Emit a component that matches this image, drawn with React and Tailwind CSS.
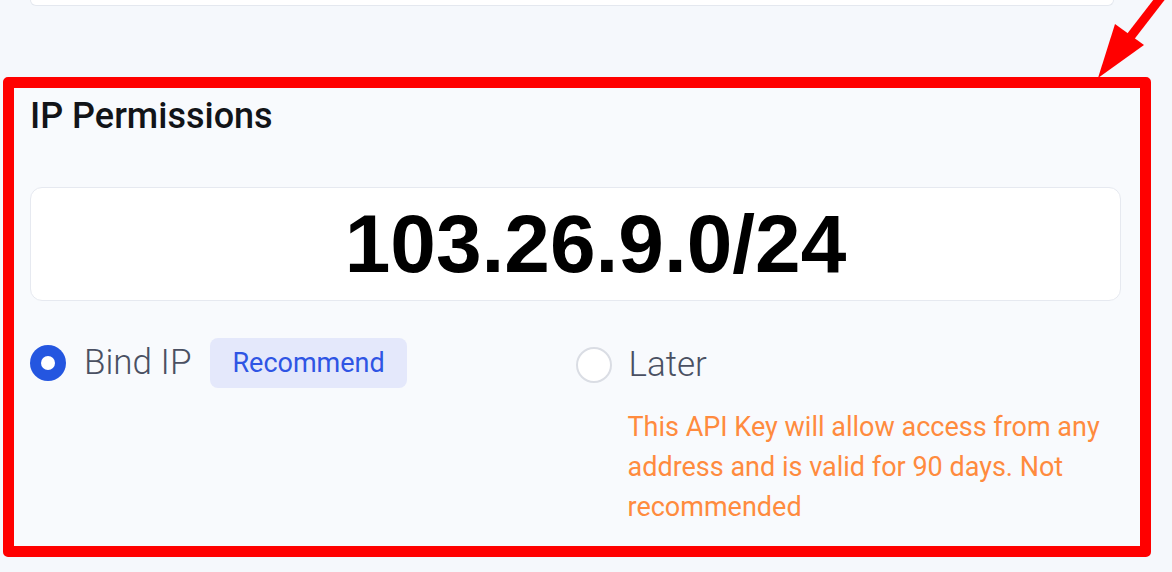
import React from 'react';

function Radio({ checked }) {
  if (checked) {
    return (
      <span className="flex h-[36px] w-[36px] shrink-0 items-center justify-center rounded-full bg-[#2456e0]">
        <span className="h-[14px] w-[14px] rounded-full bg-white" />
      </span>
    );
  }
  return <span className="h-[36px] w-[36px] shrink-0 rounded-full border-2 border-[#dadde4] bg-white" />;
}

export default function App() {
  return (
    <div className="relative h-[572px] w-[1172px] overflow-hidden bg-[#f5f8fc] font-['Roboto','Liberation_Sans',sans-serif]">
      {/* bottom of the card above */}
      <div className="ml-[30px] h-[6px] w-[1084px] rounded-b-xl border border-t-0 border-[#e4e8ef] bg-white" />

      <div className="mt-[71px] ml-[3px] h-[480px] w-[1148px] rounded-[5px] border-[11px] border-[#ff0000] bg-[#f8fafd] pl-[16px] pr-[19px]">
        <h2 className="mt-[6px] text-[36px] leading-[44px] font-medium text-[#121418]">IP Permissions</h2>

        <div className="mt-[49px] flex h-[114px] items-center justify-center rounded-xl border border-[#e6e9f0] bg-white pl-[40px]">
          <span className="font-['Liberation_Sans',Arial,sans-serif] text-[82px] leading-none font-bold text-black">103.26.9.0/24</span>
        </div>

        <div className="mt-[37px] grid grid-cols-2 items-start">
          <div className="flex items-center">
            <Radio checked />
            <span className="ml-[18px] text-[35px] leading-[50px] font-light text-[#4a5062]">Bind IP</span>
            <span className="ml-[19px] flex h-[50px] items-center rounded-lg bg-[#e4e8fb] px-[22px] text-[27px] text-[#2f55e4]">Recommend</span>
          </div>
          <div>
            <div className="flex items-center">
              <Radio />
              <span className="ml-[17px] text-[35px] leading-[54px] font-light text-[#4a5062]">Later</span>
            </div>
            <p className="mt-[15px] ml-[52px] w-[492px] text-[27px] leading-[40px] text-[#ff8b3e]">
              This API Key will allow access from any address and is valid for 90 days. Not recommended
            </p>
          </div>
        </div>
      </div>

      {/* annotation arrow */}
      <svg className="absolute top-0 left-0" width="1172" height="100" viewBox="0 0 1172 100">
        <line x1="1162" y1="-4" x2="1128" y2="40" stroke="#ff0000" strokeWidth="9" />
        <polygon points="1098,78 1115,24 1144,45" fill="#ff0000" />
      </svg>
    </div>
  );
}
